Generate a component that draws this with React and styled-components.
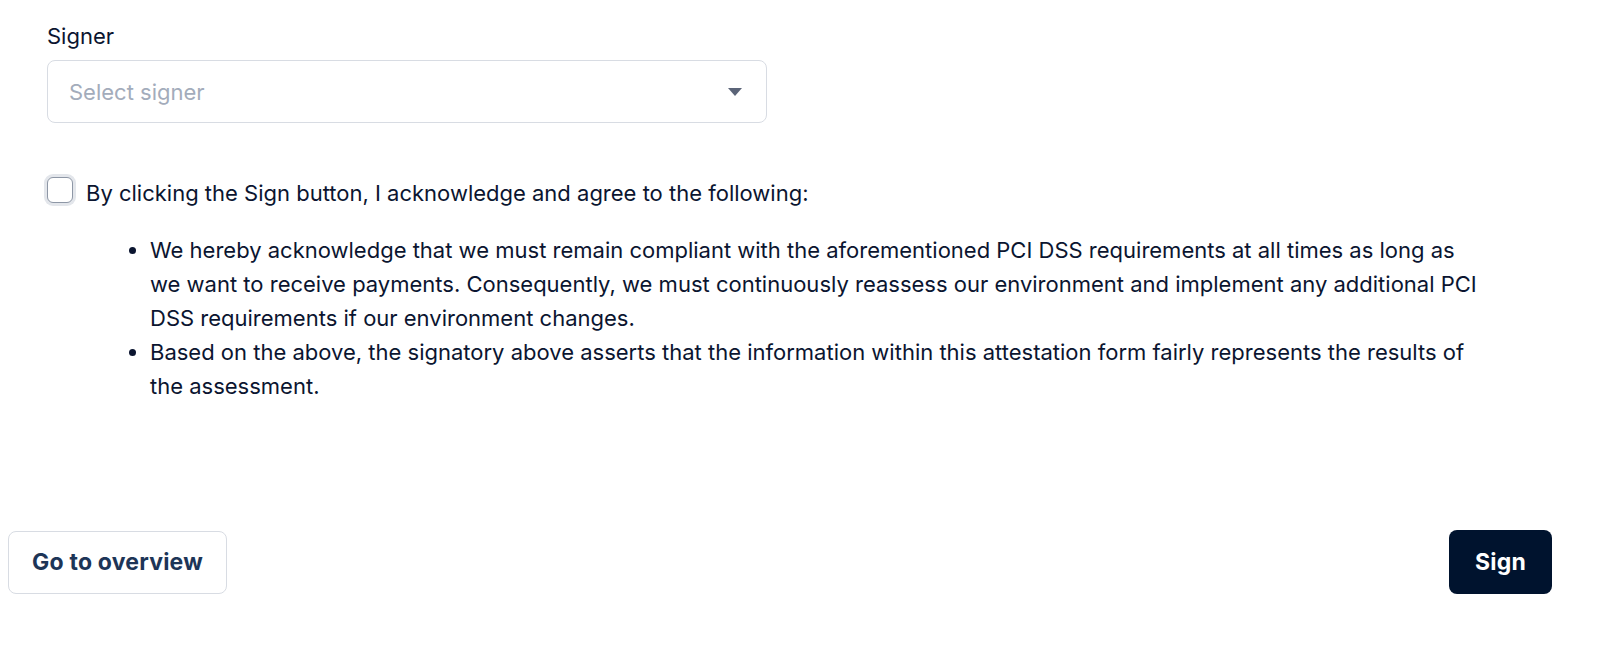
import React, { useState } from 'react';
import styled, { createGlobalStyle } from 'styled-components';

const GlobalStyle = createGlobalStyle`
	html, body {
		margin: 0;
		padding: 0;
		background: #ffffff;
		font-family: Inter, 'Liberation Sans', sans-serif;
		color: #0b1530;
	}
`;

const terms = [
	'We hereby acknowledge that we must remain compliant with the aforementioned PCI DSS requirements at all times as long as we want to receive payments. Consequently, we must continuously reassess our environment and implement any additional PCI DSS requirements if our environment changes.',
	'Based on the above, the signatory above asserts that the information within this attestation form fairly represents the results of the assessment.',
];

// Exported Component
const App = () => {
	const [agreed, setAgreed] = useState(false);
	return (
		<Page>
			<GlobalStyle />
			<Form>
				<Label>Signer</Label>
				<Select>
					<Placeholder>Select signer</Placeholder>
					<Caret viewBox='0 0 14 8'>
						<path d='M0 0H14L7 8Z' fill='#5b6478' />
					</Caret>
				</Select>
				<CheckRow>
					<Checkbox
						type='checkbox'
						checked={agreed}
						onChange={() => setAgreed(!agreed)}
					/>
					<CheckText>
						By clicking the Sign button, I acknowledge and agree to the following:
					</CheckText>
				</CheckRow>
				<Terms>
					{terms.map((t) => (
						<li key={t}>{t}</li>
					))}
				</Terms>
			</Form>
			<Footer>
				<SecondaryButton>Go to overview</SecondaryButton>
				<PrimaryButton>Sign</PrimaryButton>
			</Footer>
		</Page>
	);
};

const Page = styled.div`
	width: 1600px;
	height: 652px;
	display: flex;
	flex-direction: column;
	box-sizing: border-box;
`;

const Form = styled.section`
	padding: 23px 47px 0 47px;
	display: flex;
	flex-direction: column;
`;

const Label = styled.label`
	font-size: 22px;
	line-height: 26px;
	color: #0b1530;
	margin-bottom: 11px;
`;

const Select = styled.div`
	box-sizing: border-box;
	width: 720px;
	height: 63px;
	border: 1px solid #d8dce3;
	border-radius: 8px;
	padding: 0 24px 0 21px;
	display: flex;
	align-items: center;
	justify-content: space-between;
`;

const Placeholder = styled.span`
	font-size: 22px;
	color: #a3acbb;
`;

const Caret = styled.svg`
	width: 14px;
	height: 8px;
`;

const CheckRow = styled.div`
	margin-top: 48px;
	display: flex;
	align-items: center;
	gap: 13px;
`;

const Checkbox = styled.input`
	appearance: none;
	margin: 0;
	box-sizing: border-box;
	width: 26px;
	height: 26px;
	border: 1.5px solid #8e97a6;
	border-radius: 6px;
	box-shadow: 0 0 0 3px #e3e6eb;
	background: #fff;
`;

const CheckText = styled.span`
	font-size: 22px;
	line-height: 32px;
	margin-top: 6px;
`;

const Terms = styled.ul`
	margin: 24px 0 0 0;
	padding: 0 0 0 103px;
	max-width: 1331px;
	font-size: 22px;
	line-height: 34px;
	li::marker {
		font-size: 22px;
	}
`;

const Footer = styled.footer`
	margin-top: auto;
	padding: 0 48px 58px 8px;
	display: flex;
	justify-content: space-between;
	align-items: center;
`;

const SecondaryButton = styled.button`
	height: 63px;
	width: 219px;
	border: 1.5px solid #d8dce3;
	border-radius: 8px;
	background: #fff;
	color: #1d3557;
	font-family: Inter, 'Liberation Sans', sans-serif;
	font-size: 23px;
	font-weight: 700;
	letter-spacing: 0.2px;
`;

const PrimaryButton = styled.button`
	height: 64px;
	width: 103px;
	border: none;
	border-radius: 8px;
	background: #00132e;
	color: #fff;
	font-family: Inter, 'Liberation Sans', sans-serif;
	font-size: 23px;
	font-weight: 700;
	letter-spacing: 0.2px;
`;

export default App;
